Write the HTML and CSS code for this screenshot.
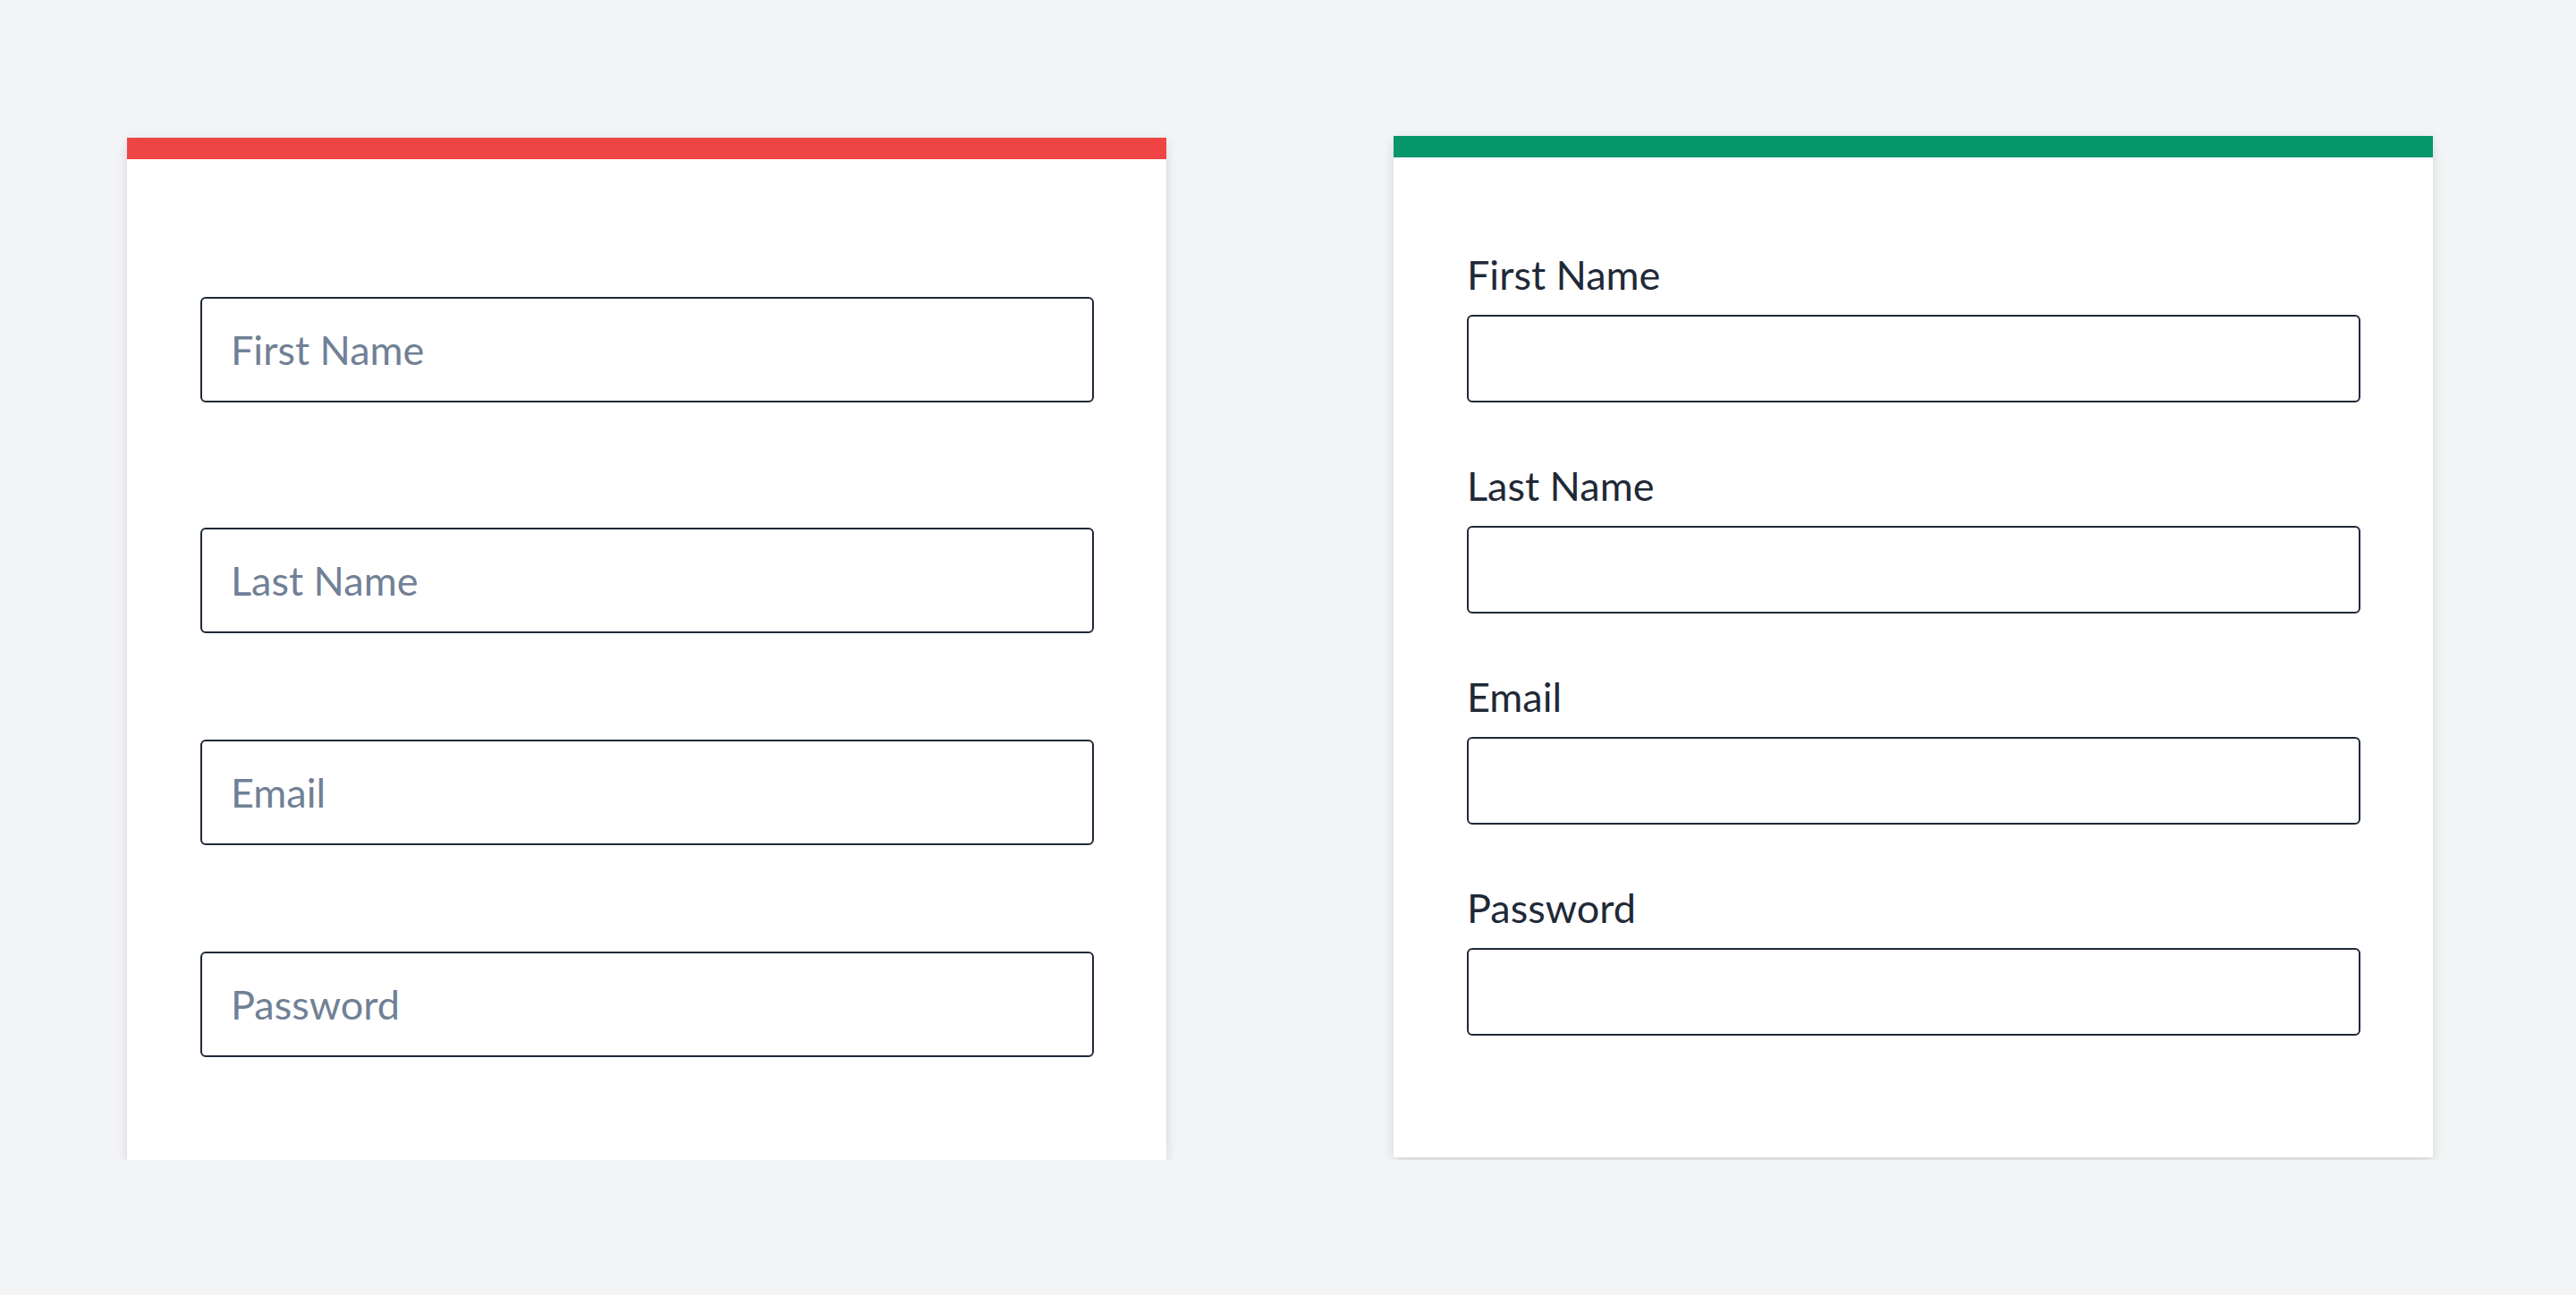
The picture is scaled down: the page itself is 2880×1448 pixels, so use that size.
FILE: index.html
```html
<!DOCTYPE html>
<html lang="en">
<head>
  <meta charset="UTF-8">
  <meta name="viewport" content="width=device-width, initial-scale=1.0">
  <title>Form Labels</title>
  <link rel="stylesheet" href="styles.css">
</head>
<body>

  <div class="page">
    <!-- Placeholder only -->
    <form class="card card--bad">
      <div class="field field--lead">
        <input type="text" placeholder="First Name" aria-label="First Name" />
      </div>
      <div class="field">
        <input type="text" placeholder="Last Name" aria-label="Last Name" />
      </div>
      <div class="field">
        <input type="email" placeholder="Email" aria-label="Email" />
      </div>
      <div class="field">
        <input type="password" placeholder="Password" aria-label="Password" />
      </div>
    </form>

    <!-- Visible labels -->
    <form class="card card--good">
      <div class="field">
        <label for="first">First Name</label>
        <input type="text" id="first" />
      </div>
      <div class="field">
        <label for="last">Last Name</label>
        <input type="text" id="last" />
      </div>
      <div class="field">
        <label for="email">Email</label>
        <input type="email" id="email" />
      </div>
      <div class="field">
        <label for="password">Password</label>
        <input type="password" id="password" />
      </div>
    </form>
  </div>

</body>
</html>
```

FILE: styles.css
```css
body {
  font-family: 'Lato', sans-serif;
  background-color: #f3f4f6;
  margin: 0;
  padding: 0;
  color: #1f2937;
}
.page {
  display: flex;
  align-items: flex-start;
  gap: 254px;
  padding: 152px 0 0 142px;
}
.card {
  width: 1162px;
  box-sizing: border-box;
  background-color: #ffffff;
  border-top: 24px solid #ef4444;
  box-shadow: 0 8px 14px -2px rgba(0, 0, 0, 0.1), 0 0 12px rgba(0, 0, 0, 0.06);
  display: flex;
  flex-direction: column;
  padding: 0 81px 0 82px;
}
.card--bad {
  margin-top: 2px;
  padding-top: 154px;
  padding-bottom: 115px;
  gap: 119px;
}
.card--bad .field--lead {
  margin-bottom: 21px;
}
.card--good {
  border-top-color: #059669;
  padding-top: 104px;
  padding-bottom: 136px;
  gap: 66px;
}
label {
  display: block;
  font-size: 45px;
  line-height: 55px;
  margin-bottom: 17px;
  color: #1f2937;
}
input {
  display: block;
  width: 100%;
  box-sizing: border-box;
  height: 98px;
  padding: 0 32px;
  border: 2px solid #1f2937;
  border-radius: 6px;
  font-family: 'Lato', sans-serif;
  font-size: 45px;
  color: #1f2937;
  background-color: #ffffff;
  outline: none;
}
.card--bad input {
  height: 118px;
}
input::placeholder {
  color: #718096;
}
```
